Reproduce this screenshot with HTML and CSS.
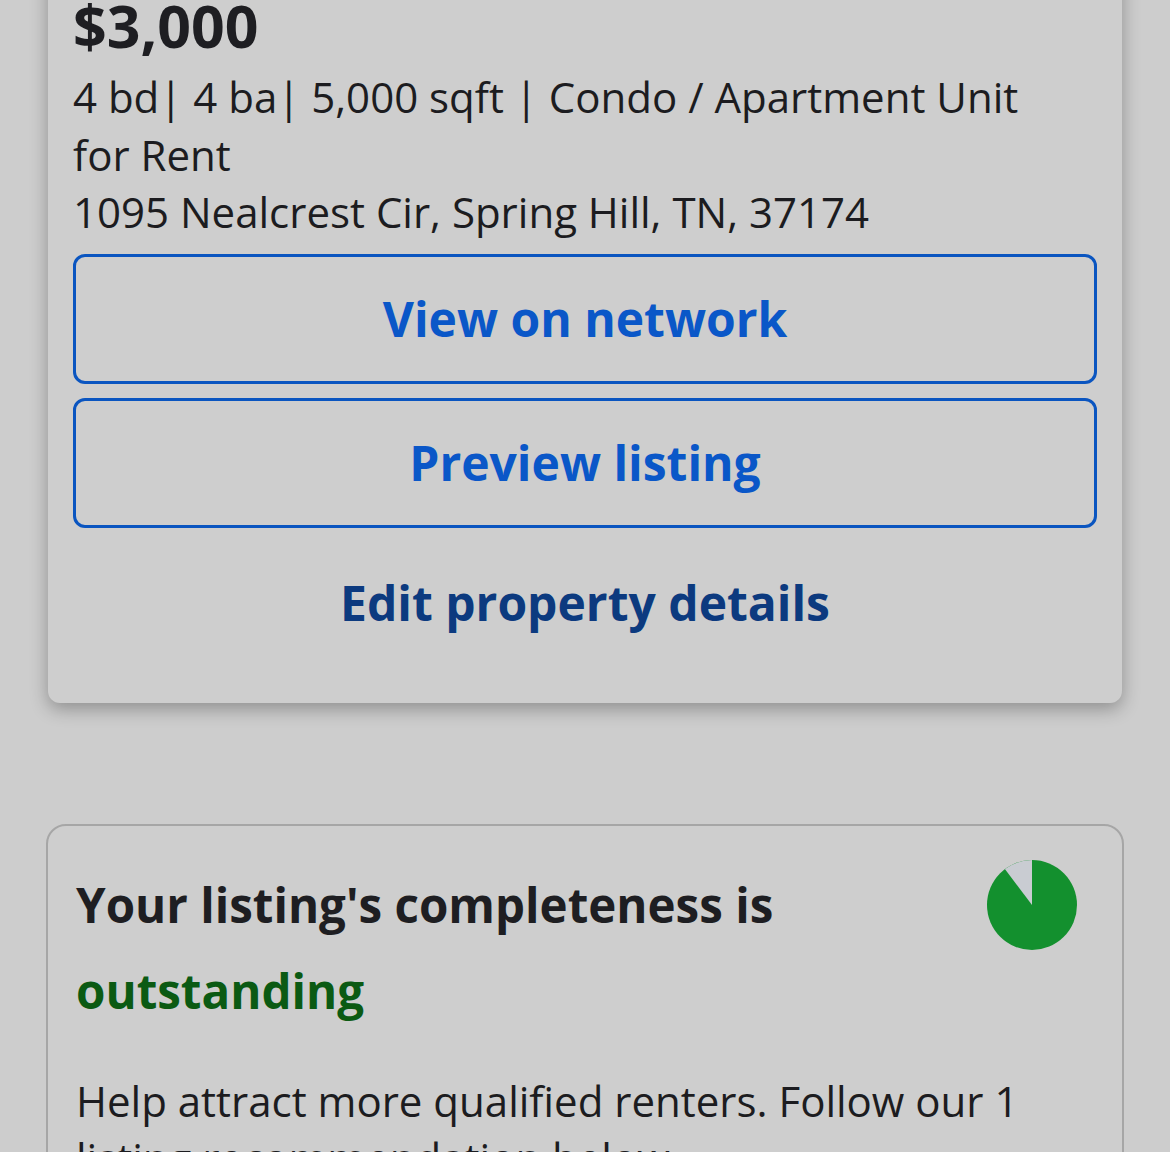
FILE: index.html
```html
<!DOCTYPE html>
<html lang="en">
<head>
<meta charset="utf-8">
<title>Listing</title>
<link rel="stylesheet" href="styles.css">
</head>
<body>
<div class="page">
  <section class="card listing">
    <div class="price">$3,000</div>
    <div class="details">4 bd| 4 ba| 5,000 sqft | Condo / Apartment Unit for Rent<br>1095 Nealcrest Cir, Spring Hill, TN, 37174</div>
    <a class="btn btn-first" href="#">View on network</a>
    <a class="btn btn-second" href="#">Preview listing</a>
    <a class="edit-link" href="#">Edit property details</a>
  </section>

  <section class="card completeness">
    <div class="comp-head">
      <h2 class="comp-title">Your listing's completeness is <span class="grade">outstanding</span></h2>
      <svg class="pie" width="90" height="90" viewBox="0 0 90 90" aria-hidden="true">
        <circle cx="45" cy="45" r="45" fill="#13902e"/>
        <path d="M45 45 L45 0 A45 45 0 0 0 17.9 9.1 Z" fill="#c9ccd2"/>
      </svg>
    </div>
    <p class="comp-text">Help attract more qualified renters. Follow our 1 listing recommendation below.</p>
  </section>
</div>
</body>
</html>
```

FILE: styles.css
```css
html, body {
  margin: 0;
  padding: 0;
  background: #cdcdcd;
  overflow: hidden;
}

body {
  font-family: "Open Sans", "Noto Sans", sans-serif;
  color: #1c1c20;
}

.page {
  padding: 0 46px;
}

.card {
  box-sizing: border-box;
  background: #cecece;
}

.listing {
  margin: -40px 2px 0;
  padding: 30px 25px 65px;
  border-radius: 0 0 12px 12px;
  box-shadow: 0 6px 18px rgba(0, 0, 0, 0.3);
  display: flex;
  flex-direction: column;
}

.price {
  font-size: 59px;
  font-weight: 700;
  line-height: 70px;
  color: #1e1e22;
}

.details {
  margin-top: 8px;
  font-size: 42px;
  line-height: 57.5px;
  color: #1c1c20;
  padding-right: 30px;
}

.btn {
  box-sizing: border-box;
  display: flex;
  align-items: center;
  justify-content: center;
  height: 130px;
  border: 3px solid #0a55c0;
  border-radius: 12px;
  color: #0a57c8;
  font-size: 48px;
  font-weight: 700;
  text-decoration: none;
}

.btn-first {
  margin-top: 13px;
}

.btn-second {
  margin-top: 14px;
}

.edit-link {
  margin-top: 40px;
  text-align: center;
  font-size: 48px;
  font-weight: 700;
  line-height: 70px;
  color: #0c3a7f;
  text-decoration: none;
}

.completeness {
  margin-top: 121px;
  border: 2px solid #a6a6a6;
  border-radius: 20px;
  padding: 36px 45px 40px 28px;
}

.comp-head {
  display: flex;
  align-items: flex-start;
  gap: 40px;
}

.comp-title {
  flex: 1;
  margin: 0;
  font-size: 47.5px;
  font-weight: 700;
  line-height: 86px;
  color: #1e1e22;
}

.grade {
  color: #0b5a13;
}

.pie {
  flex: none;
  margin-top: -2px;
}

.comp-text {
  margin: 38px 0 0;
  font-size: 42px;
  line-height: 57.5px;
  color: #1c1c20;
}
```
